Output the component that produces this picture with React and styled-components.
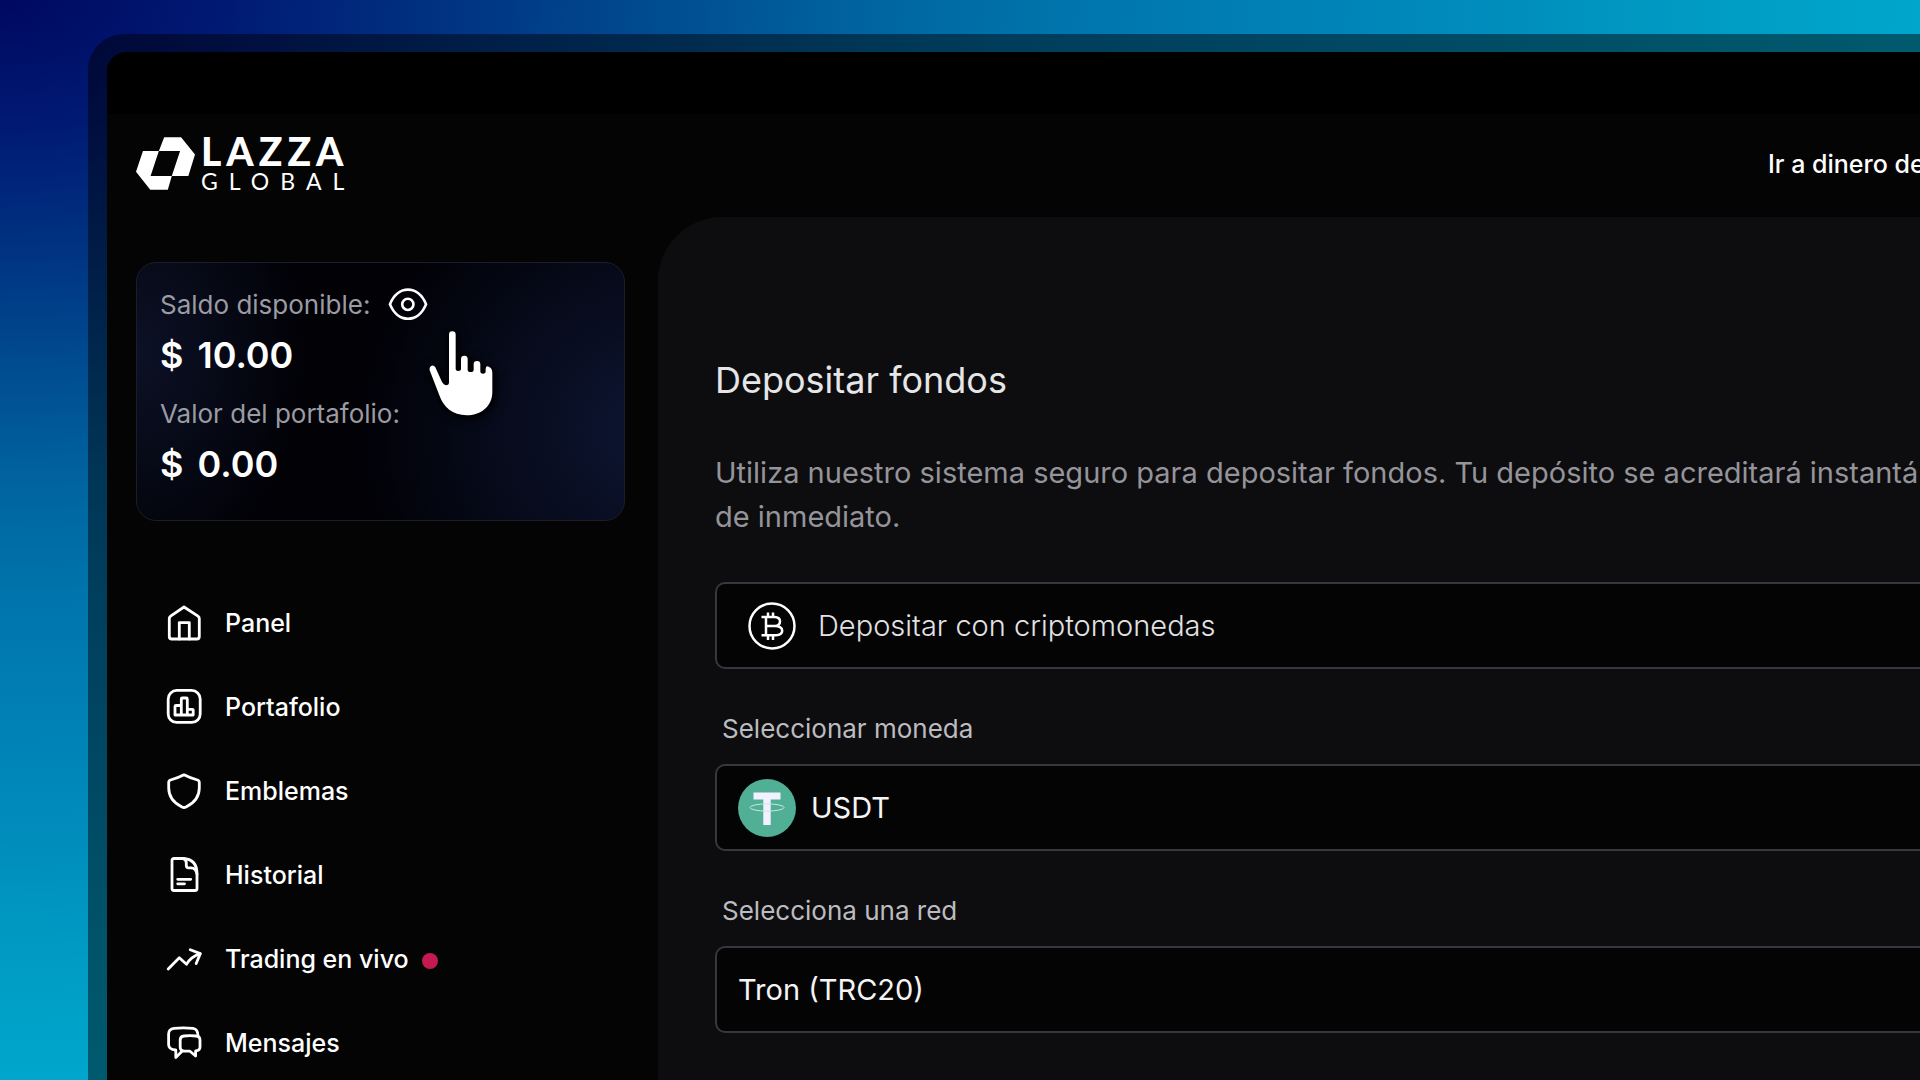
import styled, { createGlobalStyle } from "styled-components";

// Data
const menus = [
  { name: "Panel", icon: HomeIcon },
  { name: "Portafolio", icon: ChartIcon },
  { name: "Emblemas", icon: ShieldIcon },
  { name: "Historial", icon: FileIcon },
  { name: "Trading en vivo", icon: TrendIcon, live: true },
  { name: "Mensajes", icon: ChatIcon },
];

const balances = [
  { label: "Saldo disponible:", value: "10.00", toggle: true },
  { label: "Valor del portafolio:", value: "0.00" },
];

// Icons
function HomeIcon() {
  return (
    <MenuIcon viewBox="0 0 36 36">
      <path d="M18 2 L32 11.2 Q33.3 12 33.3 13.5 V31.5 Q33.3 34 30.8 34 H5.8 Q3.3 34 3.3 31.5 V13.5 Q3.3 12 4.6 11.2 Z" />
      <path d="M13.3 34 V17.6 H23.3 V34" />
    </MenuIcon>
  );
}

function ChartIcon() {
  return (
    <MenuIcon viewBox="0 0 36 36">
      <rect x="2.2" y="1.4" width="32" height="32" rx="8.5" />
      <path d="M9 26 V17.5 Q9 16.5 10 16.5 H15.3 V10 Q15.3 9 16.3 9 H20.3 Q21.3 9 21.3 10 V20.3 H26 Q27.2 20.3 27.2 21.3 V26 Z M15.3 16.5 V26 M21.3 20.3 V26" />
    </MenuIcon>
  );
}

function ShieldIcon() {
  return (
    <MenuIcon viewBox="0 0 36 36">
      <path d="M18 1.8 Q24 5 31.5 7 Q33.3 7.6 33.3 9.5 V15 Q33.3 27.5 20 34 Q18 35 16 34 Q2.7 27.5 2.7 15 V9.5 Q2.7 7.6 4.5 7 Q12 5 18 1.8 Z" />
    </MenuIcon>
  );
}

function FileIcon() {
  return (
    <MenuIcon viewBox="0 0 36 36">
      <path d="M17 1.5 H8 Q6 1.5 6 3.5 V31.5 Q6 33.5 8 33.5 H29 Q31 33.5 31 31.5 V17 Q31 2 17 1.5 Z" />
      <path d="M17 1.5 Q20.3 2 20.3 6 V8.5 Q20.3 10.8 22.5 10.8 H25 Q30 11 31 17" />
      <path d="M11.7 22.3 H24.7 M11.7 26.8 H18.5" />
    </MenuIcon>
  );
}

function TrendIcon() {
  return (
    <MenuIcon viewBox="0 0 36 36">
      <path d="M2.2 28 L13.3 16.8 L20.5 23.2 Q25 15.5 34 12.8" />
      <path d="M24.3 8.8 L34.3 12.6 L30.2 22.5" />
    </MenuIcon>
  );
}

function ChatIcon() {
  return (
    <MenuIcon viewBox="0 0 36 36">
      <path d="M32 11 Q32 4 27 3.3 Q17 2.3 8 3.3 Q2.6 4 2.6 9 V19.5 Q2.6 24.6 9.8 25 V32.5 L16.5 25.8" />
      <path d="M18 11 Q24 10.3 30 11 Q34 11.4 34 15 V22 Q34 25.6 29.6 26 V31 L24 26.2 H18 Q14.2 26 14.2 22 V15 Q14.2 11.4 18 11 Z" />
    </MenuIcon>
  );
}

function BitcoinIcon() {
  return (
    <CoinIcon viewBox="0 0 48 48">
      <circle cx="24" cy="24" r="22.5" />
      <path d="M13.5 15 H26.5 Q32 15.4 32 19.2 Q32 23.6 27 24 H18 M27 24 Q34.2 24.4 34.2 28.8 Q34.2 33 28 33.2 H13.5 M18 15 V33.2" />
      <path d="M20 10.5 V15 M25 10.5 V15 M20 33.2 V38 M25 33.2 V38" />
    </CoinIcon>
  );
}

function TetherIcon() {
  return (
    <TokenIcon viewBox="0 0 58 58">
      <circle cx="29" cy="29" r="29" fill="#50af95" />
      <path d="M15.5 13.5 H42.5 V20.5 H32.7 V46 H25.3 V20.5 H15.5 Z" fill="#f3f1ff" />
      <ellipse cx="29" cy="28.5" rx="17" ry="3.6" fill="none" stroke="#c9e9de" />
    </TokenIcon>
  );
}

function Field({ id, label, icon, option, light }) {
  return (
    <FieldGroup>
      {label && <FieldLabel htmlFor={id}>{label}</FieldLabel>}
      <SelectBox $inset={light}>
        {icon}
        <Select id={id} $light={light} aria-label={label ? undefined : option}>
          <option>{option}</option>
        </Select>
      </SelectBox>
    </FieldGroup>
  );
}

// Component
function App() {
  // Render
  return (
    <>
      <GlobalStyle />
      <Backdrop>
        <Frame>
          <AppWindow>
            <TitleBar />
            <Header>
              <Logo href="#">
                <LogoMark viewBox="47 51 178 158">
                  <path d="M132 51 H183 L225 103 L205 168 H155 L180 92 H116 Z" />
                  <path d="M68 92 H116 L91 168 H155 L143 209 H90 L47 155 Z" />
                </LogoMark>
                <LogoText>
                  <LogoName>LAZZA</LogoName>
                  <LogoSub>GLOBAL</LogoSub>
                </LogoText>
              </Logo>
              <HeaderLink href="#">Ir a dinero de</HeaderLink>
            </Header>
            <Content>
              <Sidebar>
                <BalanceCard>
                  {balances.map((b) => (
                    <Balance key={b.label}>
                      <BalanceLabel>
                        {b.label}
                        {b.toggle && (
                          <EyeButton aria-label="Ocultar saldo">
                            <EyeIcon viewBox="770 95 127 102">
                              <path d="M779 147 C802 88 865 88 888 147 C865 205 802 205 779 147 Z" />
                              <circle cx="833" cy="147" r="17" />
                            </EyeIcon>
                          </EyeButton>
                        )}
                      </BalanceLabel>
                      <BalanceValue>
                        <span>$</span>
                        <span>{b.value}</span>
                      </BalanceValue>
                    </Balance>
                  ))}
                  <Pointer viewBox="885 215 225 285">
                    <path d="M957 238 a10 10 0 0 1 20 0 V342 q0 5 8 5 t8 -5 V311 a10 10 0 0 1 20 0 V343 q0 7 9 7 t9 -7 V327 a10 10 0 0 1 20 0 V348 q0 7 8 7 t8 -7 V340 q0 -7 6 -7 q14 4 14 20 V410 C1087 455 1050 480 1010 480 C968 480 940 455 928 420 L899 345 q-2 -10 6 -14 q8 -1 11 5 L935 378 q6 12 15 12 q7 -1 7 -8 Z" />
                  </Pointer>
                </BalanceCard>
                <Nav>
                  {menus.map(({ name, icon: Icon, live }) => (
                    <NavLink href="#" key={name}>
                      <Icon />
                      {name}
                      {live && <LiveDot />}
                    </NavLink>
                  ))}
                </Nav>
              </Sidebar>
              <Main>
                <Title>Depositar fondos</Title>
                <Description>
                  Utiliza nuestro sistema seguro para depositar fondos. Tu depósito se acreditará instantá
                  <br />
                  de inmediato.
                </Description>
                <Field id="method" icon={<BitcoinIcon />} option="Depositar con criptomonedas" light />
                <Field id="coin" label="Seleccionar moneda" icon={<TetherIcon />} option="USDT" />
                <Field id="network" label="Selecciona una red" option="Tron (TRC20)" />
              </Main>
            </Content>
          </AppWindow>
        </Frame>
      </Backdrop>
    </>
  );
}

// Style
const GlobalStyle = createGlobalStyle`
  * {
    box-sizing: border-box;
  }
  body {
    margin: 0;
    font-family: Inter, "Liberation Sans", sans-serif;
    color: #fff;
    background: #000;
  }
  a {
    color: inherit;
    text-decoration: none;
  }
`;

const Backdrop = styled.div`
  height: 100vh;
  padding: 34px 0 0 88px;
  overflow: hidden;
  background: radial-gradient(
    ellipse 100% 100% at 0% 0%,
    #000860 0%,
    #001a74 12%,
    #003080 22%,
    #004e92 35%,
    #0064a0 45%,
    #0074ac 55%,
    #007eb4 64%,
    #008cbc 77%,
    #009cc4 89%,
    #00a6cc 100%
  );
`;

const Frame = styled.div`
  height: 100%;
  padding: 18px 0 0 19px;
  border-radius: 36px 0 0 0;
  background: rgba(0, 0, 0, 0.46);
`;

const AppWindow = styled.div`
  height: 100%;
  display: flex;
  flex-direction: column;
  border-radius: 20px 0 0 0;
  background: #040404;
  overflow: hidden;
`;

const TitleBar = styled.div`
  height: 62px;
  flex-shrink: 0;
  background: #000;
`;

const Header = styled.header`
  height: 103px;
  flex-shrink: 0;
  padding: 0 0 4px 29px;
  display: flex;
  justify-content: space-between;
  align-items: center;
`;

const Logo = styled.a`
  display: flex;
  align-items: center;
  gap: 6px;
`;

const LogoMark = styled.svg`
  width: 59px;
  height: 53px;
  fill: #fff;
`;

const LogoText = styled.div`
  display: flex;
  flex-direction: column;
  padding-bottom: 2px;
  font-family: Lato, sans-serif;
`;

const LogoName = styled.span`
  font-size: 39px;
  line-height: 36px;
  font-weight: 900;
  letter-spacing: 5px;
`;

const LogoSub = styled.span`
  font-size: 23px;
  line-height: 24px;
  letter-spacing: 11px;
`;

const HeaderLink = styled.a`
  width: 152px;
  font-size: 25px;
  font-weight: 500;
  white-space: nowrap;
`;

const Content = styled.div`
  flex: 1;
  min-height: 0;
  display: flex;
`;

const Sidebar = styled.aside`
  width: 551px;
  flex-shrink: 0;
  padding: 45px 33px 0 29px;
`;

const BalanceCard = styled.section`
  position: relative;
  padding: 14px 23px 25px;
  border: 1px solid #1b1d2a;
  border-radius: 20px;
  background:
    radial-gradient(ellipse 35% 90% at 0% 35%, #0c1126, transparent),
    radial-gradient(ellipse 60% 110% at 105% 65%, #0d1532, transparent),
    #010106;
`;

const Balance = styled.div`
  padding-bottom: 7px;
`;

const BalanceLabel = styled.div`
  height: 54px;
  display: flex;
  align-items: center;
  gap: 17px;
  font-size: 26px;
  color: #9a9ba3;
`;

const BalanceValue = styled.div`
  display: flex;
  gap: 14px;
  font-size: 36px;
  line-height: 48px;
  font-weight: 600;
`;

const EyeButton = styled.button`
  display: flex;
  padding: 0;
  border: none;
  background: none;
  cursor: pointer;
`;

const EyeIcon = styled.svg`
  width: 42px;
  height: 34px;
  fill: none;
  stroke: #fff;
  stroke-width: 8;
`;

const Pointer = styled.svg`
  position: absolute;
  left: 288px;
  top: 64px;
  width: 75px;
  height: 95px;
  overflow: visible;
  fill: #fff;
  filter: drop-shadow(0 0 3px #000) drop-shadow(2px 2px 4px #000);
`;

const Nav = styled.nav`
  padding: 60px 0 0 30px;
`;

const NavLink = styled.a`
  height: 84px;
  display: flex;
  align-items: center;
  gap: 23px;
  font-size: 25px;
  font-weight: 500;
`;

const MenuIcon = styled.svg`
  width: 36px;
  height: 36px;
  fill: none;
  stroke: #fff;
  stroke-width: 2.8;
  stroke-linecap: round;
  stroke-linejoin: round;
`;

const LiveDot = styled.span`
  width: 16px;
  height: 16px;
  margin: 4px 0 0 -10px;
  border-radius: 50%;
  background: #c41a50;
`;

const Main = styled.main`
  flex: 1;
  min-width: 0;
  padding: 141px 0 0 57px;
  border-radius: 64px 0 0 0;
  background: #0d0d0f;
`;

const Title = styled.h1`
  margin: 0 0 49px;
  font-size: 36px;
  line-height: 44px;
  font-weight: 400;
  color: #e6e6e8;
`;

const Description = styled.p`
  margin: 0 0 43px;
  font-size: 29px;
  line-height: 44px;
  color: #94949a;
  white-space: nowrap;
  overflow: hidden;
`;

const FieldGroup = styled.div`
  margin-bottom: 44px;
`;

const FieldLabel = styled.label`
  display: block;
  margin-bottom: 19px;
  padding-left: 7px;
  font-size: 26px;
  line-height: 32px;
  color: #bcbcc0;
`;

const SelectBox = styled.div`
  height: 87px;
  padding-left: ${(props) => (props.$inset ? 31 : 21)}px;
  display: flex;
  align-items: center;
  gap: ${(props) => (props.$inset ? 22 : 15)}px;
  border: 2px solid #37373d;
  border-right: none;
  border-radius: 10px 0 0 10px;
  background: #040404;
`;

const Select = styled.select`
  flex: 1;
  min-width: 0;
  height: 100%;
  padding: 0;
  border: none;
  outline: none;
  appearance: none;
  background: transparent;
  color: ${(props) => (props.$light ? "#e2e2e4" : "#f4f4f5")};
  font-family: inherit;
  font-size: 29px;
  font-weight: ${(props) => (props.$light ? 300 : 400)};
`;

const CoinIcon = styled.svg`
  width: 48px;
  height: 48px;
  fill: none;
  stroke: #fff;
  stroke-width: 2.5;
`;

const TokenIcon = styled.svg`
  width: 58px;
  height: 58px;
`;

export default App;
